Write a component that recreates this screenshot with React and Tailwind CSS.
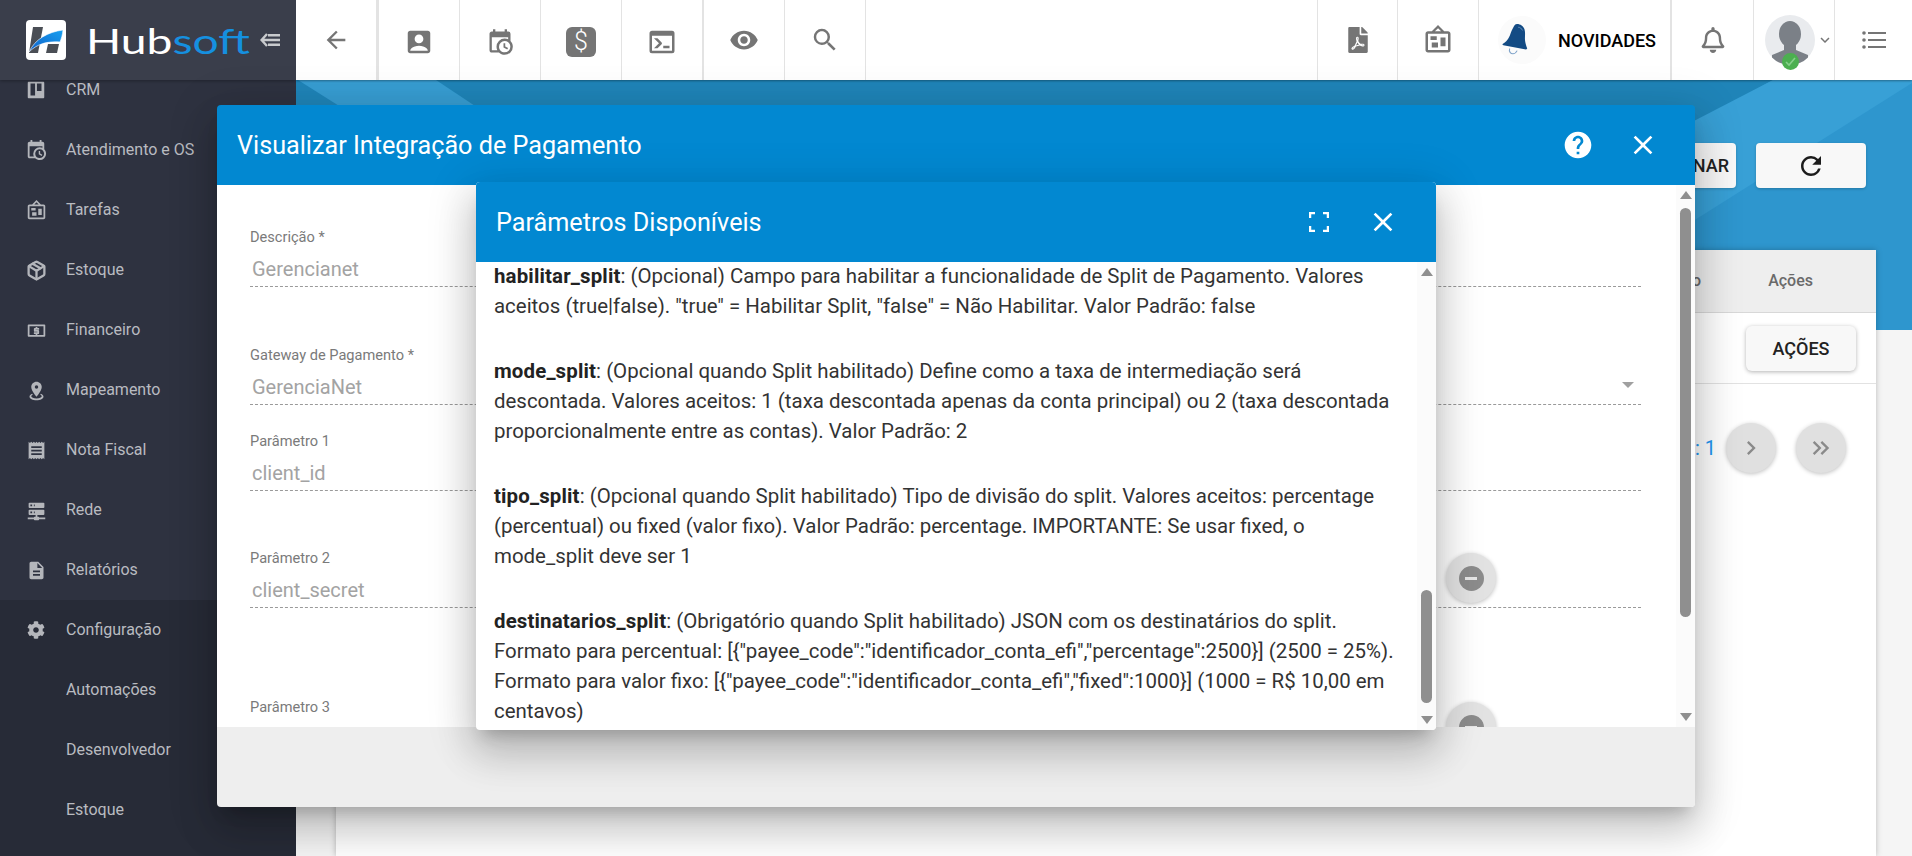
import React from "react";
import { MdArrowBack, MdAccountBox, MdVisibility, MdSearch, MdClose, MdHelp, MdRefresh, MdChevronRight, MdKeyboardDoubleArrowRight, MdExpandMore, MdReceipt, MdDescription } from "react-icons/md";
import { FaCog, FaFilePdf, FaRegBell } from "react-icons/fa";
import { LuPackage } from "react-icons/lu";

const P = ({ d, className = "" }) => (
  <svg viewBox="0 0 24 24" className={className} fill="currentColor"><path d={d} /></svg>
);
const CAL = "M15,13H16.5V15.82L18.94,17.23L18.19,18.53L15,16.69V13M19,8H5V19H9.67C9.24,18.09 9,17.07 9,16A7,7 0 0,1 16,9C17.07,9 18.09,9.24 19,9.67V8M5,21C3.89,21 3,20.1 3,19V5C3,3.89 3.89,3 5,3H6V1H8V3H16V1H18V3H19A2,2 0 0,1 21,5V11.1C22.24,12.36 23,14.09 23,16A7,7 0 0,1 16,23C14.09,23 12.36,22.24 11.1,21H5M16,11.15A4.85,4.85 0 0,0 11.15,16C11.15,18.68 13.32,20.85 16,20.85A4.85,4.85 0 0,0 20.85,16C20.85,13.32 18.68,11.15 16,11.15Z";
const CONSOLE = "M20,19V7H4V19H20M20,3A2,2 0 0,1 22,5V19A2,2 0 0,1 20,21H4A2,2 0 0,1 2,19V5C2,3.89 2.9,3 4,3H20M13,17V15H18V17H13M9.58,13L5.57,9H8.4L11.7,12.3C12.09,12.69 12.09,13.33 11.7,13.72L8.42,17H5.59L9.58,13Z";
const BOARD = "M12.04 2.5L9.53 5H14.53L12.04 2.5M4 7V20H20V7H4M12 0L17 5V5L20 5C21.11 5 22 5.89 22 7V20C22 21.11 21.11 22 20 22H4C2.89 22 2 21.11 2 20V7C2 5.89 2.89 5 4 5H7V5L12 0M7 18V14H12V18H7M14 17V10H18V17H14M6 12V9H11V12H6Z";
const PIN = "M12,2C15.31,2 18,4.66 18,7.95C18,12.41 12,19 12,19C12,19 6,12.41 6,7.95C6,4.66 8.69,2 12,2M12,6A2,2 0 0,0 10,8A2,2 0 0,0 12,10A2,2 0 0,0 14,8A2,2 0 0,0 12,6M20,19C20,21.21 16.42,23 12,23C7.58,23 4,21.21 4,19C4,17.71 5.22,16.56 7.11,15.83L7.75,16.74C6.67,17.19 6,17.81 6,18.5C6,19.88 8.69,21 12,21C15.31,21 18,19.88 18,18.5C18,17.81 17.33,17.19 16.25,16.74L16.89,15.83C18.78,16.56 20,17.71 20,19Z";
const SERVER = "M13,19H14A1,1 0 0,1 15,20H22V22H15A1,1 0 0,1 14,23H10A1,1 0 0,1 9,22H2V20H9A1,1 0 0,1 10,19H11V17H4A1,1 0 0,1 3,16V12A1,1 0 0,1 4,11H20A1,1 0 0,1 21,12V16A1,1 0 0,1 20,17H13V19M4,3H20A1,1 0 0,1 21,4V8A1,1 0 0,1 20,9H4A1,1 0 0,1 3,8V4A1,1 0 0,1 4,3M9,7H10V5H9V7M9,15H10V13H9V15M5,5V7H7V5H5M5,13V15H7V13H5Z";
const TRELLO = "M4,3H20A1,1 0 0,1 21,4V20A1,1 0 0,1 20,21H4A1,1 0 0,1 3,20V4A1,1 0 0,1 4,3M6,5V18H11V5H6M13,5V13H18V5H13Z";
const CASH = "M3,5H21A1,1 0 0,1 22,6V18A1,1 0 0,1 21,19H3A1,1 0 0,1 2,18V6A1,1 0 0,1 3,5M4,7V17H20V7H4M11,8H13V9H15V11H11V11.5H14A1,1 0 0,1 15,12.5V15A1,1 0 0,1 14,16H13V17H11V16H9V14H13V13.5H10A1,1 0 0,1 9,12.5V10A1,1 0 0,1 10,9H11V8Z";

const SideItem = ({ icon, label, cls = "" }) => (
  <div className={"flex h-[60px] shrink-0 items-center " + cls}>
    <div className="flex w-[66px] justify-center pl-[6px] pr-0 text-[#b4b6bb]">{icon}</div>
    <span className="text-[16px] text-[#b9bbc0]">{label}</span>
  </div>
);

const Tool = ({ children, w = "w-[81px]" }) => (
  <div className={"flex h-full shrink-0 items-center justify-center border-r border-[#e3e3e3] text-[#757575] " + w}>{children}</div>
);

const Field = ({ label, value, cls, select }) => (
  <div className={"absolute left-[33px] right-[54px] " + cls}>
    <div className="text-[14.6px] leading-[20px] text-[#7a7a7a]">{label}</div>
    <div className="mt-[10px] pl-[2px] text-[20px] leading-[24px] text-[#a3a3a3]">{value}</div>
    <div className="mt-[5px] border-b border-dashed border-[#9a9a9a]"></div>
    {select && <div className="absolute right-[7px] top-[37px] h-0 w-0 border-x-[6px] border-t-[6px] border-x-transparent border-t-[#a0a0a0]"></div>}
  </div>
);

const Up = () => <div className="h-0 w-0 border-x-[6px] border-b-[8px] border-x-transparent border-b-[#8f8f8f]"></div>;
const Down = () => <div className="h-0 w-0 border-x-[6px] border-t-[8px] border-x-transparent border-t-[#8f8f8f]"></div>;

const Minus = ({ cls }) => (
  <div className={"absolute left-[1446px] flex h-[50px] w-[50px] items-center justify-center rounded-full bg-[#e2e2e2] shadow-[0_1px_4px_rgba(0,0,0,0.25)] " + cls}>
    <div className="flex h-[25px] w-[25px] items-center justify-center rounded-full bg-[#8c8c8c]">
      <div className="h-[3px] w-[12px] bg-[#e6e6e6]"></div>
    </div>
  </div>
);

const modalShadow = "shadow-[0_11px_15px_-7px_rgba(0,0,0,0.2),0_24px_38px_3px_rgba(0,0,0,0.14),0_9px_46px_8px_rgba(0,0,0,0.12)]";
const B = ({ children }) => <b className="font-bold tracking-[0.15px] text-[#222]">{children}</b>;

export default function App() {
  return (
    <div className="relative flex h-[856px] w-[1912px] overflow-hidden bg-[#f5f5f5] font-['Roboto',sans-serif]">
      {/* Sidebar */}
      <aside className="relative z-10 flex h-full w-[296px] shrink-0 flex-col overflow-hidden bg-[#2e3240]">
        <div className="relative z-10 flex h-[80px] shrink-0 items-center bg-[#3a3e4b] pl-[26px] shadow-[0_1px_3px_rgba(0,0,0,0.3)]">
          <svg viewBox="0 0 40 40" className="h-[40px] w-[40px] shrink-0">
            <defs>
              <linearGradient id="sw" x1="0" y1="1" x2="1" y2="0">
                <stop offset="0" stopColor="#0f5fc8" />
                <stop offset="1" stopColor="#18a0f0" />
              </linearGradient>
            </defs>
            <rect width="40" height="40" rx="4" fill="#fff" />
            <path d="M7 7h10l-5 26H3z" fill="#4a4e55" />
            <path d="M22 24h11l-2 9H20z" fill="#4a4e55" />
            <path d="M3 32C9 19 22 12 37 10c-.5 5-1.5 8-3 12-13-1-23 2-31 10z" fill="url(#sw)" stroke="#fff" strokeWidth="0.6" />
          </svg>
          <div className="ml-[20px] w-[130px] origin-left scale-x-[1.32] text-[35px] leading-none font-normal whitespace-nowrap text-white font-['Lato',sans-serif]">
            Hub<span className="text-[#1590e0]">soft</span>
          </div>
          <svg viewBox="0 0 20 14" className="ml-[44px] h-[14px] w-[20px] shrink-0 text-[#c8cacd]" fill="none" stroke="currentColor" strokeWidth="2.4">
            <path d="M7 1L1.6 7l5.4 6M2 7h18M8 2.2h12M8 11.8h12" />
          </svg>
        </div>
        <div className="-mt-[20px] flex flex-col">
          <SideItem icon={<P d={TRELLO} className="h-[22px] w-[22px]" />} label="CRM" />
          <SideItem icon={<P d={CAL} className="h-[22px] w-[22px]" />} label="Atendimento e OS" />
          <SideItem icon={<P d={BOARD} className="h-[21px] w-[21px]" />} label="Tarefas" />
          <SideItem icon={<LuPackage className="h-[21px] w-[21px] stroke-[2.6]" />} label="Estoque" />
          <SideItem icon={<P d={CASH} className="h-[21px] w-[21px]" />} label="Financeiro" />
          <SideItem icon={<P d={PIN} className="h-[21px] w-[21px]" />} label="Mapeamento" />
          <SideItem icon={<MdReceipt className="h-[21px] w-[21px]" />} label="Nota Fiscal" />
          <SideItem icon={<P d={SERVER} className="h-[21px] w-[21px]" />} label="Rede" />
          <SideItem icon={<MdDescription className="h-[21px] w-[21px]" />} label="Relatórios" />
        </div>
        <div className="flex flex-1 flex-col bg-[#272b37]">
          <SideItem icon={<FaCog className="h-[18px] w-[18px]" />} label="Configuração" />
          <SideItem icon={null} label="Automações" />
          <SideItem icon={null} label="Desenvolvedor" />
          <SideItem icon={null} label="Estoque" />
        </div>
      </aside>

      {/* Main */}
      <div className="flex min-w-0 flex-1 flex-col">
        <header className="z-[5] flex h-[80px] shrink-0 items-center justify-between bg-white shadow-[0_1px_2px_rgba(0,0,0,0.35)]">
          <div className="flex h-full">
            <div className="flex h-full w-[83px] shrink-0 items-center justify-center border-r-[3px] border-[#e3e3e3] text-[#757575]"><MdArrowBack className="h-[28px] w-[28px]" /></div>
            <Tool><MdAccountBox className="mt-[4px] h-[30px] w-[30px]" /></Tool>
            <Tool><P d={CAL} className="mt-[4px] h-[28px] w-[28px]" /></Tool>
            <Tool>
              <div className="mt-[4px] flex h-[30px] w-[30px] items-center justify-center rounded-[6px] bg-[#757575] text-[25px] font-light text-white">$</div>
            </Tool>
            <Tool w="w-[82px] border-r-[2px]"><P d={CONSOLE} className="mt-[4px] h-[30px] w-[30px]" /></Tool>
            <Tool><MdVisibility className="h-[30px] w-[30px]" /></Tool>
            <Tool><MdSearch className="h-[30px] w-[30px]" /></Tool>
          </div>
          <div className="flex h-full">
            <Tool w="w-[81px] border-l"><FaFilePdf className="h-[26px] w-[22px]" /></Tool>
            <Tool><P d={BOARD} className="h-[30px] w-[30px]" /></Tool>
            <div className="flex h-full w-[193px] items-center border-r-[2px] border-[#e3e3e3]">
              <div className="ml-[19px] flex h-[48px] w-[48px] items-center justify-center rounded-full bg-[#fbfbfb]">
                <svg viewBox="0 0 30 32" className="mr-[14px] h-[34px] w-[32px]">
                  <path d="M17 1c3 0 6 2 7 5 1 4 0 7 .5 11 .3 2 .8 4 2 7l-1 1L4 21l-1-1c3-2 5-4 6-6 2-3 2-6 4-9 1-2 2-4 4-4z" fill="#134b84" />
                  <path d="M10 24c-1 3 1 5 3 5s3-1 4-3" fill="none" stroke="#7fa3c9" strokeWidth="1" />
                  <path d="M18 4c2 0 3 1 4 3" fill="none" stroke="#6d95c2" strokeWidth="0.8" />
                </svg>
              </div>
              <span className="ml-[12px] text-[18px] font-medium text-black">NOVIDADES</span>
            </div>
            <Tool w="w-[82px]"><FaRegBell className="h-[26px] w-[26px]" /></Tool>
            <div className="relative flex h-full w-[81px] items-center border-r border-[#e3e3e3]">
              <div className="ml-[11px] h-[50px] w-[50px] shrink-0 overflow-hidden rounded-full bg-[#e9ebee]">
                <svg viewBox="0 0 50 50" className="h-full w-full" fill="#7b8087">
                  <ellipse cx="25" cy="19" rx="11" ry="13" />
                  <path d="M19 28h12v7l12 5v10H7V40l12-5z" />
                </svg>
              </div>
              <div className="absolute left-[28px] top-[53px] h-[17px] w-[17px] rounded-full bg-[#4caf50]">
                <svg viewBox="0 0 17 17" className="h-full w-full" fill="none" stroke="#86cf8a" strokeWidth="1.6"><path d="M4 9l3 3 6-7" /></svg>
              </div>
              <MdExpandMore className="ml-[1px] h-[18px] w-[18px] shrink-0 text-[#757575]" />
            </div>
            <div className="flex h-full w-[77px] items-center justify-center text-[#757575]">
              <svg viewBox="0 0 24 18" className="h-[18px] w-[24px]" fill="currentColor">
                <circle cx="2" cy="2" r="1.8" /><circle cx="2" cy="9" r="1.8" /><circle cx="2" cy="16" r="1.8" />
                <rect x="6" y="1" width="18" height="2" /><rect x="6" y="8" width="18" height="2" /><rect x="6" y="15" width="18" height="2" />
              </svg>
            </div>
          </div>
        </header>

        <main className="relative flex-1">
          <div className="relative h-[250px] overflow-hidden bg-[#2e96ce]">
            <svg viewBox="0 0 1616 250" className="absolute inset-0 h-full w-full">
              <rect width="1616" height="250" fill="#2e96ce" />
              <path d="M0 0H1477L1024 250H0z" fill="#1f84b8" />
              <path d="M1477 0H1616V3L1394 143V43z" fill="#38a0d6" />
              <path d="M2 0H140L230 60H97z" fill="#379dd2" />
            </svg>
          </div>
          <div className="absolute right-[36px] top-[63px] flex gap-[20px]">
            <div className="flex h-[45px] w-[120px] items-center justify-end rounded-[4px] bg-[#f8f8f8] pr-[7px] text-[18px] font-medium text-[#222] shadow-[0_1px_3px_rgba(0,0,0,0.2)]">NAR</div>
            <div className="mr-[10px] flex h-[45px] w-[110px] items-center justify-center rounded-[4px] bg-[#f8f8f8] text-[#1c1c1c] shadow-[0_1px_3px_rgba(0,0,0,0.2)]"><MdRefresh className="h-[30px] w-[30px]" /></div>
          </div>
          <section className="absolute bottom-0 left-[40px] right-[36px] top-[170px] bg-white shadow-[0_0_6px_rgba(0,0,0,0.25)]">
            <div className="flex h-[63px] items-center justify-end gap-[67px] border-b border-[#d8d8d8] bg-[#eeeeee] pr-[63px] text-[16px] font-medium text-[#6a6a6a]">
              <span>Situação</span>
              <span>Ações</span>
            </div>
            <div className="flex h-[71px] items-center justify-end border-b border-[#e2e2e2] pr-[20px]">
              <div className="flex h-[45px] w-[110px] items-center justify-center rounded-[6px] bg-[#f8f8f8] text-[18px] font-medium text-[#222] shadow-[0_1px_4px_rgba(0,0,0,0.3)]">AÇÕES</div>
            </div>
            <div className="mt-[39px] flex items-center justify-end pr-[30px]">
              <span className="mr-[10px] text-[20px] text-[#2196f3]">Página: 1</span>
              <div className="flex h-[50px] w-[50px] items-center justify-center rounded-full bg-[#e0e0e0] text-[#8a8a8a] shadow-[0_1px_4px_rgba(0,0,0,0.25)]"><MdChevronRight className="h-[28px] w-[28px]" /></div>
              <div className="ml-[20px] flex h-[50px] w-[50px] items-center justify-center rounded-full bg-[#e0e0e0] text-[#8a8a8a] shadow-[0_1px_4px_rgba(0,0,0,0.25)]"><MdKeyboardDoubleArrowRight className="h-[28px] w-[28px]" /></div>
            </div>
          </section>
        </main>
      </div>

      {/* Outer modal */}
      <div className={"absolute left-[217px] top-[105px] z-20 flex h-[702px] w-[1478px] flex-col overflow-hidden rounded-[4px] " + modalShadow}>
        <div className="flex h-[80px] shrink-0 items-center justify-between bg-[#0288d1] pl-[20px] pr-[36px] text-white">
          <h1 className="mt-[1px] text-[25.2px] font-normal">Visualizar Integração de Pagamento</h1>
          <div className="flex items-center gap-[33px]">
            <MdHelp className="h-[32px] w-[32px]" />
            <MdClose className="h-[32px] w-[32px]" />
          </div>
        </div>
        <div className="relative h-[542px] shrink-0 overflow-hidden bg-white">
          <Field label="Descrição *" value="Gerencianet" cls="top-[42px]" />
          <Field label="Gateway de Pagamento *" value="GerenciaNet" select cls="top-[160px]" />
          <Field label="Parâmetro 1" value="client_id" cls="top-[246px]" />
          <Field label="Parâmetro 2" value="client_secret" cls="top-[363px]" />
          <Field label="Parâmetro 3" value="" cls="top-[512px]" />
          <div className="absolute bottom-0 right-0 top-0 flex w-[19px] flex-col items-center bg-[#fbfbfb]">
            <div className="mt-[6px]"><Up /></div>
            <div className="mt-[9px] h-[409px] w-[11px] rounded-full bg-[#8f8f8f]"></div>
            <div className="mt-auto mb-[6px]"><Down /></div>
          </div>
        </div>
        <div className="flex-1 bg-[#eeeeee]"></div>
      </div>

      {/* Minus buttons sit on the outer modal body, clipped by its footer */}
      <div className="absolute left-0 top-[185px] z-20 h-[542px] w-[1676px] overflow-hidden">
        <Minus cls="top-[368px]" />
        <Minus cls="top-[517px]" />
      </div>

      {/* Inner modal */}
      <div className={"absolute left-[476px] top-[182px] z-30 flex h-[548px] w-[960px] flex-col overflow-hidden rounded-[4px] bg-white " + modalShadow}>
        <div className="flex h-[80px] shrink-0 items-center justify-between bg-[#0288d1] pl-[20px] pr-[37px] text-white">
          <h2 className="mt-[1px] text-[25.2px] font-normal">Parâmetros Disponíveis</h2>
          <div className="flex items-center gap-[38px]">
            <svg viewBox="0 0 20 20" className="h-[20px] w-[20px]" fill="none" stroke="currentColor" strokeWidth="2.5"><path d="M1 6V1h5M14 1h5v5M19 14v5h-5M6 19H1v-5" /></svg>
            <MdClose className="h-[32px] w-[32px]" />
          </div>
        </div>
        <div className="relative flex-1 overflow-hidden">
          <div className="-mt-[1px] w-[930px] pl-[18px] text-[20.45px] leading-[30px] text-[#333]">
            <p className="mb-[35px]"><B>habilitar_split</B>: (Opcional) Campo para habilitar a funcionalidade de Split de Pagamento. Valores aceitos (true|false). "true" = Habilitar Split, "false" = Não Habilitar. Valor Padrão: false</p>
            <p className="mb-[35px]"><B>mode_split</B>: (Opcional quando Split habilitado) Define como a taxa de intermediação será descontada. Valores aceitos: 1 (taxa descontada apenas da conta principal) ou 2 (taxa descontada proporcionalmente entre as contas). Valor Padrão: 2</p>
            <p className="mb-[35px]"><B>tipo_split</B>: (Opcional quando Split habilitado) Tipo de divisão do split. Valores aceitos: percentage (percentual) ou fixed (valor fixo). Valor Padrão: percentage. IMPORTANTE: Se usar fixed, o mode_split deve ser 1</p>
            <p><B>destinatarios_split</B>: (Obrigatório quando Split habilitado) JSON com os destinatários do split. Formato para percentual: {'[{"payee_code":"identificador_conta_efi","percentage":2500}]'} (2500 = 25%). Formato para valor fixo: {'[{"payee_code":"identificador_conta_efi","fixed":1000}]'} (1000 = R$ 10,00 em centavos)</p>
          </div>
          <div className="absolute bottom-0 right-0 top-0 flex w-[19px] flex-col items-center bg-[#fbfbfb]">
            <div className="mt-[6px]"><Up /></div>
            <div className="mt-[314px] h-[113px] w-[11px] rounded-full bg-[#8f8f8f]"></div>
            <div className="mt-auto mb-[6px]"><Down /></div>
          </div>
        </div>
      </div>
    </div>
  );
}
